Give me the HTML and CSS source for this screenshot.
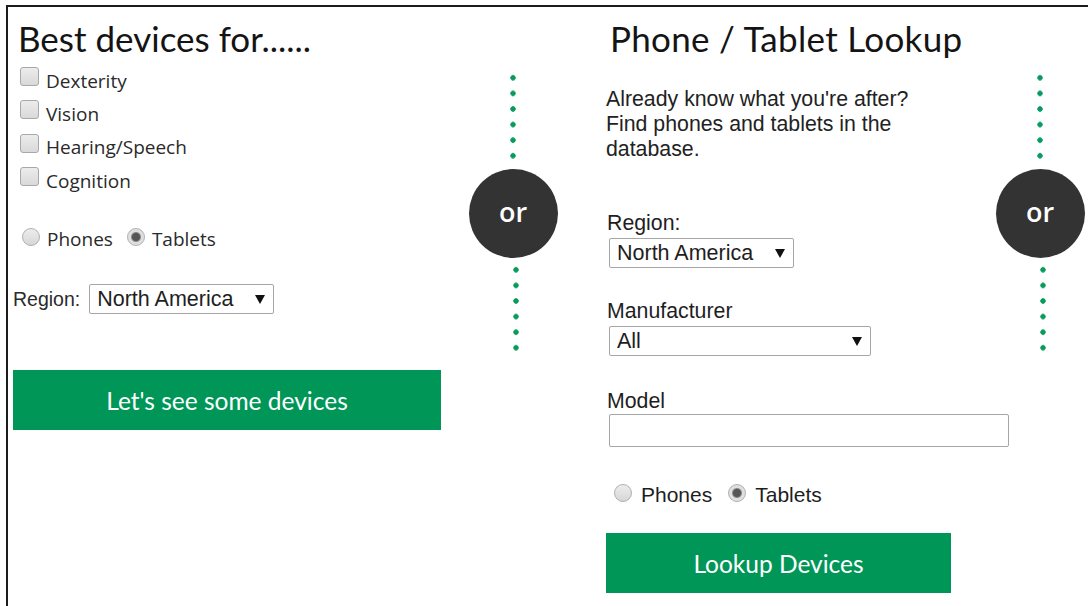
FILE: index.html
```html
<!DOCTYPE html>
<html lang="en">
<head>
<meta charset="utf-8">
<title>Find a device</title>
<link rel="stylesheet" href="styles.css">
</head>
<body>
<div class="frame">
  <section class="finder">
    <h2 class="finder-title">Best devices for......</h2>
    <ul class="needs">
      <li><label><input type="checkbox" class="box"> Dexterity</label></li>
      <li><label><input type="checkbox" class="box"> Vision</label></li>
      <li><label><input type="checkbox" class="box"> Hearing/Speech</label></li>
      <li><label><input type="checkbox" class="box"> Cognition</label></li>
    </ul>
    <div class="kind kind-left">
      <label><input type="radio" name="kind1" class="dot"> Phones</label>
      <label><input type="radio" name="kind1" class="dot" checked> Tablets</label>
    </div>
    <div class="region-row">
      <span class="region-label">Region:</span>
      <span class="select select-region"><select><option>North America</option></select></span>
    </div>
    <button class="go go-left">Let's see some devices</button>
  </section>

  <div class="divider">
    <span class="dots"></span>
    <span class="or">or</span>
    <span class="dots dots-low"></span>
  </div>

  <section class="lookup">
    <h2 class="lookup-title">Phone / Tablet Lookup</h2>
    <p class="intro">Already know what you're after? Find phones and tablets in the database.</p>
    <div class="field field-region">
      <span class="field-label">Region:</span>
      <span class="select select-region"><select><option>North America</option></select></span>
    </div>
    <div class="field field-maker">
      <span class="field-label">Manufacturer</span>
      <span class="select select-maker"><select><option>All</option></select></span>
    </div>
    <div class="field field-model">
      <span class="field-label">Model</span>
      <input type="text" class="model-input">
    </div>
    <div class="kind kind-right">
      <label><input type="radio" name="kind2" class="dot"> Phones</label>
      <label><input type="radio" name="kind2" class="dot" checked> Tablets</label>
    </div>
    <button class="go go-right">Lookup Devices</button>
  </section>

  <div class="divider divider-end">
    <span class="dots"></span>
    <span class="or">or</span>
    <span class="dots dots-low"></span>
  </div>
</div>
</body>
</html>
```

FILE: styles.css
```css
html, body {
  margin: 0;
  padding: 0;
  background: #fff;
  overflow: hidden;
}

body {
  color: #1e1e1e;
  font-family: "Liberation Sans", Arial, sans-serif;
}

/* outer panel: only the top and left rules show */
.frame {
  margin: 5px 0 0 6px;
  border-top: 2px solid #1c1c1c;
  border-left: 2px solid #1c1c1c;
  height: 620px;
  display: flex;
  align-items: flex-start;
  padding-left: 5px;
}

/* ---------- left: needs finder ---------- */
.finder {
  width: 428px;
  flex-shrink: 0;
}

.finder-title,
.lookup-title {
  font-family: "Lato", sans-serif;
  font-weight: 400;
  font-size: 35px;
  line-height: 40px;
  margin: 0;
  color: #141414;
}

.finder-title {
  margin: 11px 0 0 5px;
}

.needs {
  list-style: none;
  margin: 6px 0 0;
  padding: 0 0 0 7px;
  font-family: "Open Sans", sans-serif;
  font-size: 19px;
}

.needs li {
  height: 33.3px;
  display: flex;
  align-items: center;
}

.needs label {
  display: flex;
  align-items: center;
  gap: 7px;
  color: #2a2a2a;
}

.box {
  -webkit-appearance: none;
  appearance: none;
  width: 19px;
  height: 19px;
  margin: 0;
  border: 1px solid #a8a8a8;
  border-radius: 3px;
  background: linear-gradient(#ececec, #d9d9d9);
  position: relative;
  top: -4px;
}

.dot {
  -webkit-appearance: none;
  appearance: none;
  width: 18px;
  height: 18px;
  margin: 0;
  border: 1px solid #b0b0b0;
  border-radius: 50%;
  background: linear-gradient(#ededed, #d6d6d6);
  position: relative;
  top: -2px;
}

.dot:checked {
  background: radial-gradient(circle, #555 0 3.5px, #8a8a8a 4.5px, #dedede 5.5px, #e4e4e4);
}

.kind {
  display: flex;
  height: 26px;
  align-items: center;
}

.kind label {
  display: flex;
  align-items: center;
}

.kind-left {
  margin: 29px 0 0 9px;
  gap: 14px;
  font-family: "Open Sans", sans-serif;
  font-size: 19px;
  color: #2a2a2a;
}

.kind-left label {
  gap: 7px;
}

.region-row {
  margin-top: 32px;
  display: flex;
  align-items: center;
  gap: 9px;
  font-size: 19.5px;
}

.region-label {
  color: #2a2a2a;
}

.select {
  position: relative;
  display: inline-block;
  height: 30px;
}

.select select {
  -webkit-appearance: none;
  appearance: none;
  height: 30px;
  margin: 0;
  border: 1px solid #a6a6a6;
  border-radius: 2px;
  background: #fff;
  font-family: "Liberation Sans", Arial, sans-serif;
  font-size: 21.5px;
  color: #1e1e1e;
  padding: 0 30px 0 7px;
  box-sizing: border-box;
}

.select::after {
  content: "";
  position: absolute;
  right: 9px;
  top: 11px;
  border-left: 5px solid transparent;
  border-right: 5px solid transparent;
  border-top: 9px solid #111;
  pointer-events: none;
}

.select-region select {
  width: 185px;
}

.select-maker select {
  width: 262px;
}

.go {
  display: block;
  border: 0;
  background: #009658;
  color: #fff;
  font-family: "Lato", sans-serif;
  font-size: 24.5px;
  height: 60px;
  padding: 0;
  cursor: pointer;
}

.go-left {
  width: 428px;
  margin-top: 56px;
}

/* ---------- "or" separator ---------- */
.divider {
  width: 144px;
  flex-shrink: 0;
  display: flex;
  flex-direction: column;
  align-items: center;
  padding-top: 63px;
}

.divider-end {
  width: 60px;
}

.dots {
  width: 6px;
  height: 94px;
  background: radial-gradient(circle, #0a9a5e 0 2.4px, transparent 3px) 0 0 / 6px 15.6px repeat-y;
}

.dots-low {
  margin-left: 5px;
}

.or {
  flex-shrink: 0;
  width: 89px;
  height: 89px;
  margin: 5px 0 4px;
  border-radius: 50%;
  background: #333;
  color: #fff;
  font-family: "Open Sans", sans-serif;
  font-weight: 600;
  font-size: 27px;
  line-height: 86px;
  text-align: center;
}

/* ---------- right: direct lookup ---------- */
.lookup {
  width: 404px;
  flex-shrink: 0;
  padding-left: 21px;
}

.lookup-title {
  margin: 11px 0 0 4px;
  letter-spacing: 0.3px;
}

.intro {
  margin: 29px 0 0;
  width: 320px;
  font-size: 21.3px;
  line-height: 25px;
  color: #222;
}

.field {
  display: flex;
  flex-direction: column;
  align-items: flex-start;
  font-size: 21.3px;
}

.field-label {
  line-height: 24px;
  margin-left: 1px;
}

.field .select {
  margin: 3px 0 0 3px;
}

.field-region {
  margin-top: 49px;
}

.field-maker {
  margin-top: 31px;
}

.field-model {
  margin-top: 33px;
}

.model-input {
  width: 400px;
  height: 33px;
  box-sizing: border-box;
  border: 1px solid #a6a6a6;
  border-radius: 2px;
  margin: 1px 0 0 3px;
}

.kind-right {
  margin: 35px 0 0 8px;
  gap: 16px;
  font-size: 21px;
}

.kind-right label {
  gap: 9px;
}

.go-right {
  width: 345px;
  margin-top: 25px;
}
```
